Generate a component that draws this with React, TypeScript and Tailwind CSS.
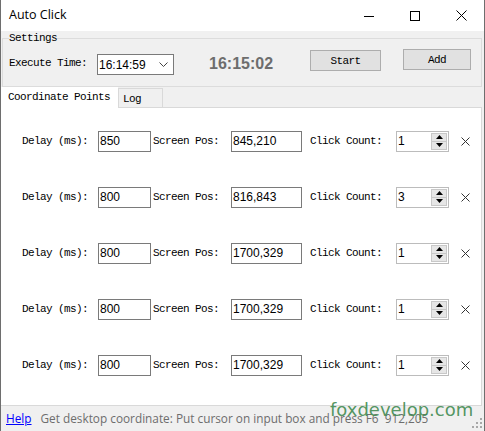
import React from 'react';

interface ClickPoint {
  delay: string;
  pos: string;
  count: string;
}

const points: ClickPoint[] = [
  { delay: '850', pos: '845,210', count: '1' },
  { delay: '800', pos: '816,843', count: '3' },
  { delay: '800', pos: '1700,329', count: '1' },
  { delay: '800', pos: '1700,329', count: '1' },
  { delay: '800', pos: '1700,329', count: '1' },
];

// SimSun-like fixed width labels
const mono = "font-['Liberation_Mono',monospace] text-[11px] leading-[14px] tracking-[-0.6px] text-black whitespace-pre";
const sans = "font-['Liberation_Sans',Arial,sans-serif] text-[12px] leading-[14px] text-black";

const TitleBar: React.FC = () => (
  <div className="flex h-[31px] items-center bg-white">
    <span className="pl-[8px] font-['Open_Sans',sans-serif] text-[12.5px] text-black">Auto Click</span>
    <div className="ml-auto flex h-full">
      <div className="flex w-[46px] items-center justify-center">
        <svg width="10" height="10" viewBox="0 0 10 10">
          <line x1="0" y1="5.5" x2="10" y2="5.5" stroke="#000" strokeWidth="1" />
        </svg>
      </div>
      <div className="flex w-[46px] items-center justify-center">
        <svg width="10" height="10" viewBox="0 0 10 10">
          <rect x="0.5" y="0.5" width="9" height="9" fill="none" stroke="#000" strokeWidth="1" />
        </svg>
      </div>
      <div className="flex w-[46px] items-center justify-center">
        <svg width="11" height="11" viewBox="0 0 11 11">
          <path d="M0.5 0.5 L10.5 10.5 M10.5 0.5 L0.5 10.5" stroke="#000" strokeWidth="1" />
        </svg>
      </div>
    </div>
  </div>
);

const Settings: React.FC = () => (
  <div className="pt-[7px] pl-[1px] pr-[2px]">
    <div className="relative h-[49px] border border-[#dcdcdc] pl-[6px] pt-[11px]">
      <span className={`${mono} absolute -top-[8px] left-[6px] bg-[#f0f0f0]`}>Settings</span>
      <div className="flex items-start">
        <span className={`${mono} mt-[6px] w-[88px]`}>Execute Time:</span>
        <div className="mt-[4px] flex h-[21px] w-[77px] items-center border border-[#7a7a7a] bg-white pl-[1px]">
          <span className={sans}>16:14:59</span>
          <svg className="ml-auto mr-[5px]" width="9" height="5" viewBox="0 0 9 5">
            <path d="M0.5 0.5 L4.5 4.5 L8.5 0.5" fill="none" stroke="#444" strokeWidth="1" />
          </svg>
        </div>
        <span className="ml-[35px] mt-[5px] font-['Liberation_Sans',Arial,sans-serif] text-[16px] font-bold leading-[18px] text-[#6d6d6d]">
          16:15:02
        </span>
        <button className="ml-[37px] flex h-[21px] w-[71px] items-center justify-center border border-[#adadad] bg-[#e1e1e1]">
          <span className={mono}>Start</span>
        </button>
        <button className="ml-[22px] -mt-[1px] flex h-[21px] w-[68px] items-center justify-center border border-[#adadad] bg-[#e1e1e1]">
          <span className={mono}>Add</span>
        </button>
      </div>
    </div>
  </div>
);

const SpinBox: React.FC<{ value: string }> = ({ value }) => (
  <div className="flex h-[21px] w-[53px] items-center border border-[#bcbcbc] bg-white pl-[1px]">
    <span className={sans}>{value}</span>
    <div className="ml-auto mr-[1px] flex h-[17px] w-[16px] flex-col border border-[#c8c8c8] bg-[#e6e6e6]">
      <div className="flex flex-1 items-center justify-center border-b border-[#c8c8c8]">
        <svg width="7" height="4" viewBox="0 0 7 4">
          <path d="M0 4 L3.5 0 L7 4 Z" fill="#000" />
        </svg>
      </div>
      <div className="flex flex-1 items-center justify-center">
        <svg width="7" height="4" viewBox="0 0 7 4">
          <path d="M0 0 L3.5 4 L7 0 Z" fill="#000" />
        </svg>
      </div>
    </div>
  </div>
);

const PointRow: React.FC<{ point: ClickPoint }> = ({ point }) => (
  <div className="flex h-[56px] items-center pl-[21px]">
    <span className={`${mono} w-[76px]`}>Delay (ms):</span>
    <div className="flex h-[21px] w-[53px] items-center border border-[#7a7a7a] bg-white pl-[1px]">
      <span className={sans}>{point.delay}</span>
    </div>
    <span className={`${mono} ml-[2px] w-[78px]`}>Screen Pos:</span>
    <div className="flex h-[21px] w-[71px] items-center border border-[#7a7a7a] bg-white pl-[1px]">
      <span className={sans}>{point.pos}</span>
    </div>
    <span className={`${mono} ml-[8px] w-[86px]`}>Click Count:</span>
    <SpinBox value={point.count} />
    <svg className="ml-[12px]" width="9" height="9" viewBox="0 0 9 9">
      <path d="M0.5 0.5 L8.5 8.5 M8.5 0.5 L0.5 8.5" stroke="#333" strokeWidth="1" />
    </svg>
  </div>
);

const Tabs: React.FC = () => (
  <div className="flex flex-1 flex-col">
    <div className="flex h-[20px] items-end">
      <div className="relative z-10 flex h-[21px] w-[117px] translate-y-[1px] items-start bg-white pl-[7px] pt-[3px]">
        <span className={mono}>Coordinate Points</span>
      </div>
      <div className="flex h-[19px] w-[45px] items-end border border-b-0 border-[#d9d9d9] bg-[#f0f0f0] pb-[1px] pl-[4px]">
        <span className={mono}>Log</span>
      </div>
    </div>
    <div className="mr-[2px] flex-1 border border-l-0 border-[#d9d9d9] bg-white pt-[5px]">
      {points.map((point, i) => (
        <PointRow key={i} point={point} />
      ))}
    </div>
  </div>
);

const StatusBar: React.FC = () => (
  <div className="relative flex h-[25px] items-center pl-[5px] font-['Open_Sans',sans-serif] text-[11.8px]">
    <span className="text-[#0000ff] underline">Help</span>
    <span className="ml-[9px] whitespace-pre text-[#6d6d6d]">
      Get desktop coordinate: Put cursor on input box and press F6  912,205
    </span>
    <span className="absolute left-[329px] -top-[8px] font-['DejaVu_Sans',sans-serif] text-[18px] leading-[24px] text-[#3f8a4f]/90">
      foxdevelop.com
    </span>
    <svg className="absolute bottom-[2px] right-[1px]" width="11" height="11" viewBox="0 0 11 11">
      <rect x="8" y="0" width="2" height="2" fill="#a8a8a8" />
      <rect x="4" y="4" width="2" height="2" fill="#a8a8a8" />
      <rect x="8" y="4" width="2" height="2" fill="#a8a8a8" />
      <rect x="0" y="8" width="2" height="2" fill="#a8a8a8" />
      <rect x="4" y="8" width="2" height="2" fill="#a8a8a8" />
      <rect x="8" y="8" width="2" height="2" fill="#a8a8a8" />
    </svg>
  </div>
);

const App: React.FC = () => {
  return (
    <div className="flex h-[431px] w-[485px] flex-col border-x border-[#6e6e6e] bg-[#f0f0f0]">
      <TitleBar />
      <Settings />
      <Tabs />
      <StatusBar />
    </div>
  );
};

export default App;
